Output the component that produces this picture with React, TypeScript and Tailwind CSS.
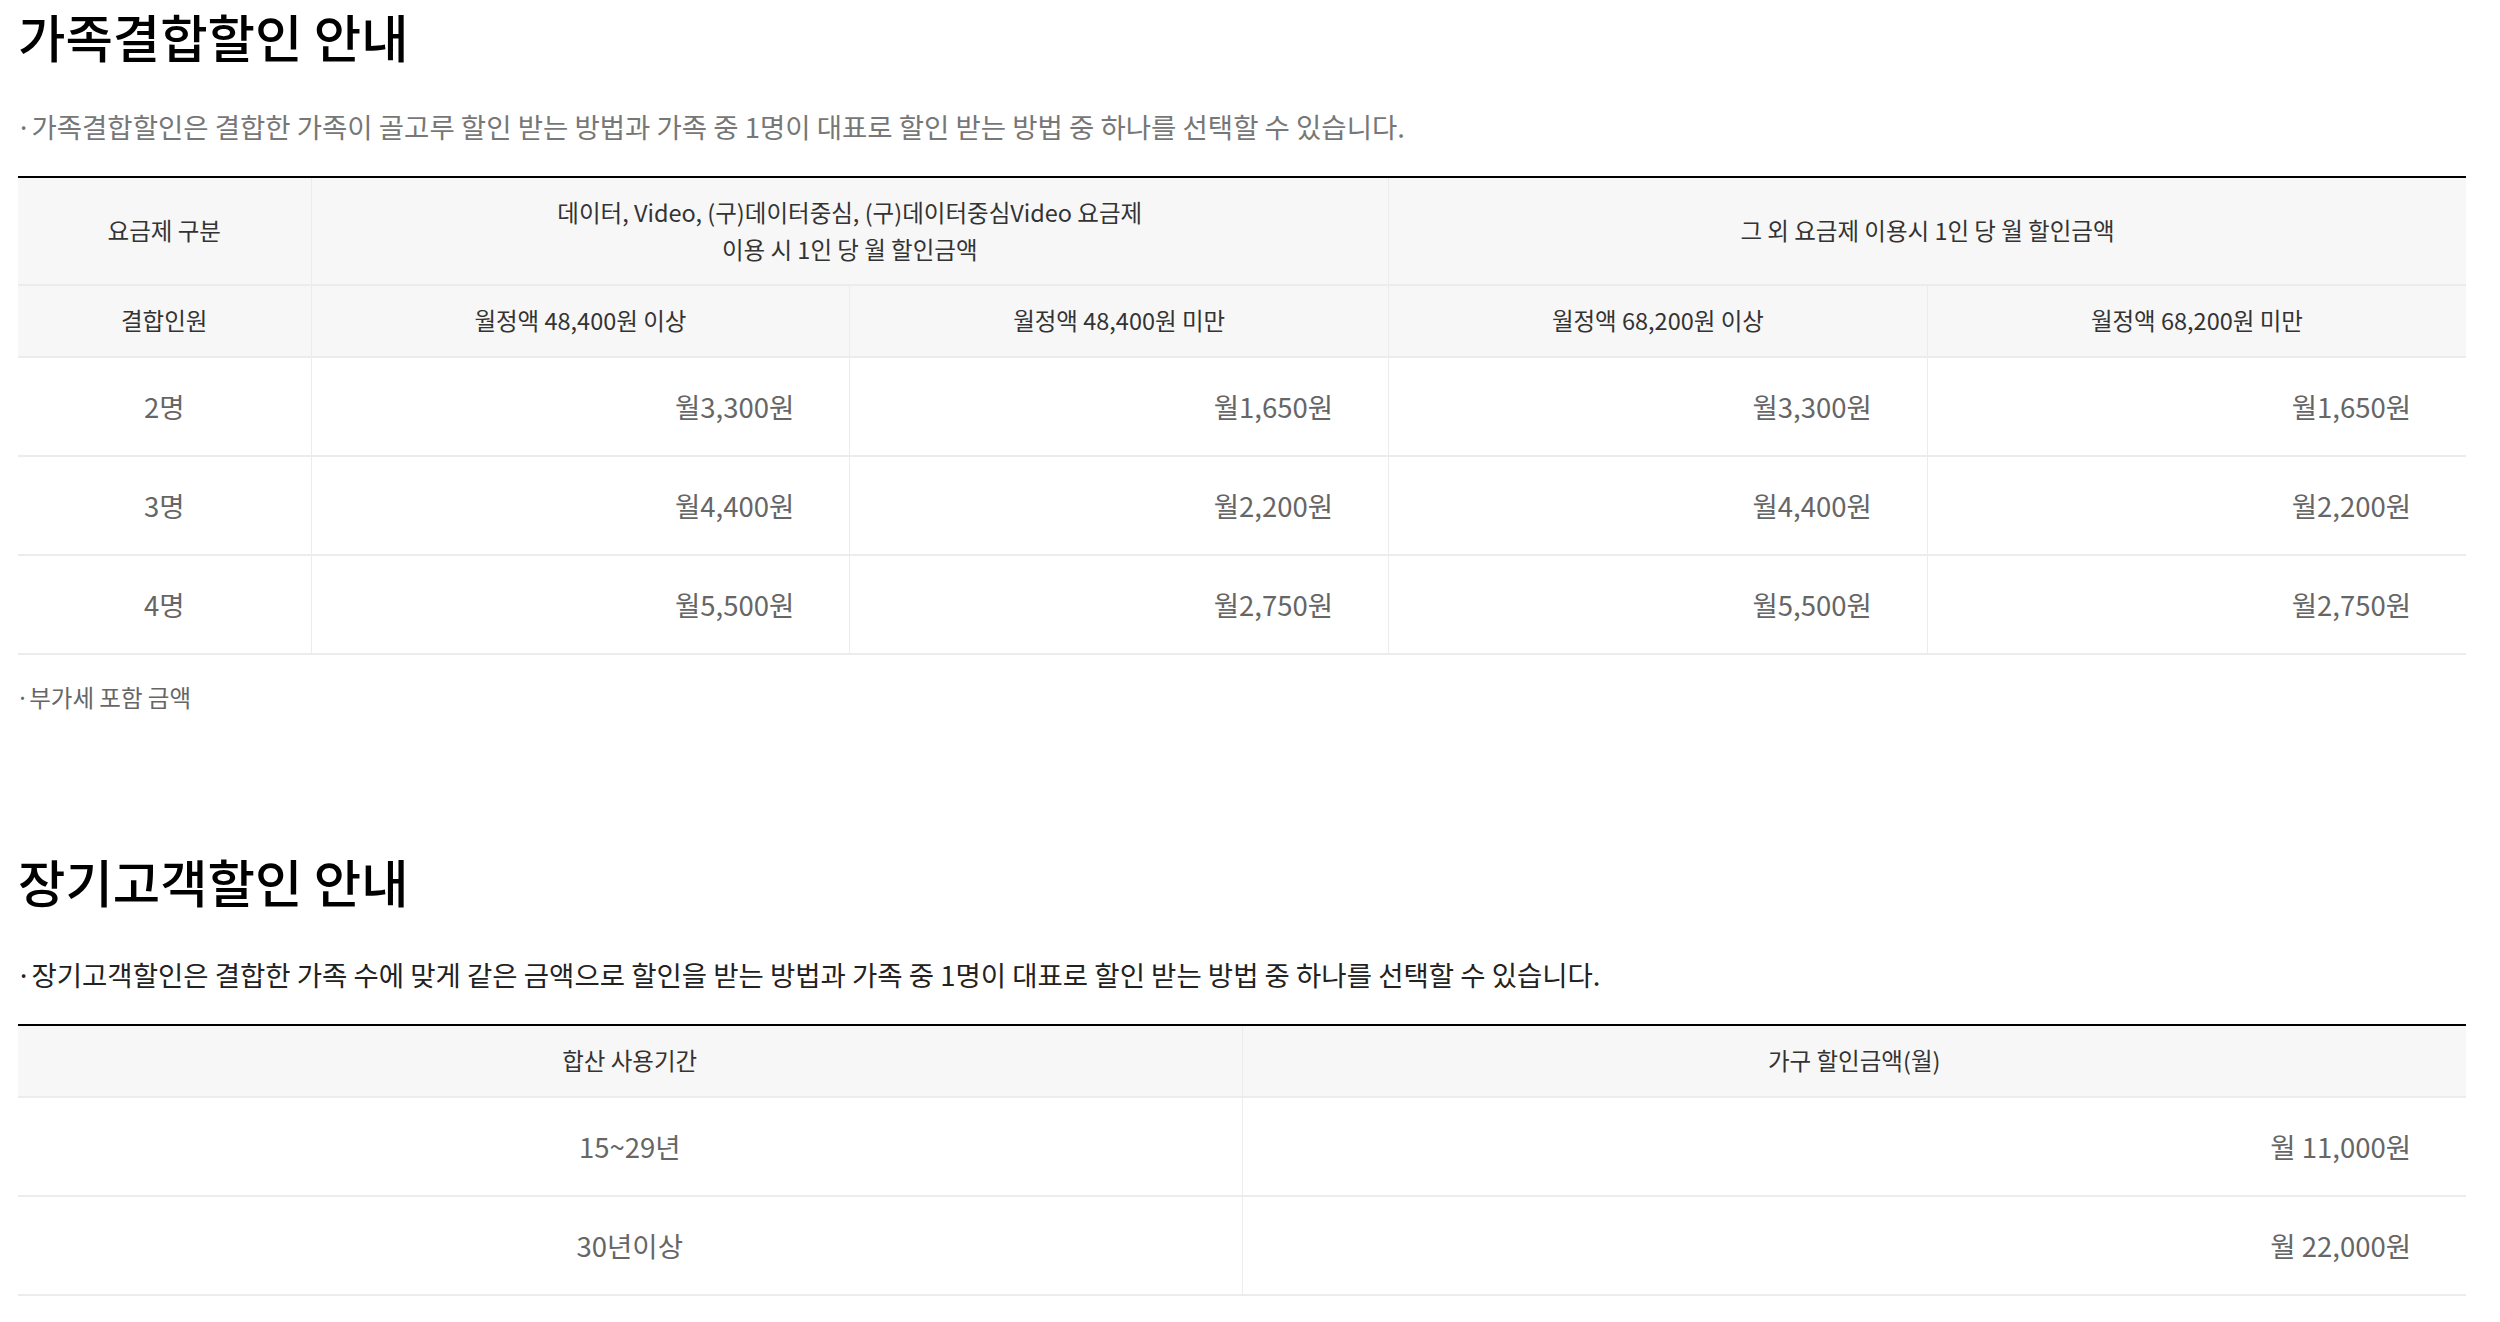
const familyRows = [
  { people: '2명', values: ['월3,300원', '월1,650원', '월3,300원', '월1,650원'] },
  { people: '3명', values: ['월4,400원', '월2,200원', '월4,400원', '월2,200원'] },
  { people: '4명', values: ['월5,500원', '월2,750원', '월5,500원', '월2,750원'] },
]

const longRows = [
  { period: '15~29년', amount: '월 11,000원' },
  { period: '30년이상', amount: '월 22,000원' },
]

export default function App() {
  return (
    <div className="w-[2500px] min-h-[1322px] bg-white px-[18px] pr-[34px] font-['Noto_Sans_CJK_KR','Noto_Sans',sans-serif]">
      {/* 가족결합할인 */}
      <section>
        <h2 className="text-[51.5px] leading-[72px] font-medium text-black">가족결합할인 안내</h2>
        <p className="mt-[36px] -ml-[2px] text-[27.5px] leading-[36px] text-[#777]">·가족결합할인은 결합한 가족이 골고루 할인 받는 방법과 가족 중 1명이 대표로 할인 받는 방법 중 하나를 선택할 수 있습니다.</p>

        <table className="mt-[32px] w-full table-fixed border-collapse border-t-2 border-black">
          <colgroup>
            <col className="w-[293px]" />
            <col />
            <col />
            <col />
            <col />
          </colgroup>
          <thead>
            <tr className="h-[108px] bg-[#f7f7f7] text-[23.5px] text-[#333]">
              <th className="font-normal border-b-2 border-[#ececec]">요금제 구분</th>
              <th colSpan={2} className="font-normal leading-[37px] border-b-2 border-l border-[#ececec]">
                데이터, Video, (구)데이터중심, (구)데이터중심Video 요금제
                <br />
                이용 시 1인 당 월 할인금액
              </th>
              <th colSpan={2} className="font-normal border-b-2 border-l border-[#ececec]">그 외 요금제 이용시 1인 당 월 할인금액</th>
            </tr>
            <tr className="h-[72px] bg-[#f7f7f7] text-[23.5px] text-[#333]">
              <th className="font-normal border-b-2 border-[#ececec]">결합인원</th>
              <th className="font-normal border-b-2 border-l border-[#ececec]">월정액 48,400원 이상</th>
              <th className="font-normal border-b-2 border-l border-[#ececec]">월정액 48,400원 미만</th>
              <th className="font-normal border-b-2 border-l border-[#ececec]">월정액 68,200원 이상</th>
              <th className="font-normal border-b-2 border-l border-[#ececec]">월정액 68,200원 미만</th>
            </tr>
          </thead>
          <tbody>
            {familyRows.map((row) => (
              <tr key={row.people} className="h-[99px] text-[27.5px] text-[#666]">
                <td className="text-center border-b-2 border-[#ececec]">{row.people}</td>
                {row.values.map((v, i) => (
                  <td key={i} className="text-right pr-[55px] border-b-2 border-l border-[#ececec]">{v}</td>
                ))}
              </tr>
            ))}
          </tbody>
        </table>

        <p className="mt-[26px] -ml-[2px] text-[23.5px] leading-[32px] text-[#666]">·부가세 포함 금액</p>
      </section>

      {/* 장기고객할인 */}
      <section className="mt-[132px]">
        <h2 className="text-[51.5px] leading-[72px] font-medium text-black">장기고객할인 안내</h2>
        <p className="mt-[39px] -ml-[2px] text-[27.5px] leading-[36px] text-[#222]">·장기고객할인은 결합한 가족 수에 맞게 같은 금액으로 할인을 받는 방법과 가족 중 1명이 대표로 할인 받는 방법 중 하나를 선택할 수 있습니다.</p>

        <table className="mt-[32px] w-full table-fixed border-collapse border-t-2 border-black">
          <thead>
            <tr className="h-[72px] bg-[#f7f7f7] text-[23.5px] text-[#333]">
              <th className="font-normal border-b-2 border-[#ececec]">합산 사용기간</th>
              <th className="font-normal border-b-2 border-l border-[#ececec]">가구 할인금액(월)</th>
            </tr>
          </thead>
          <tbody>
            {longRows.map((row) => (
              <tr key={row.period} className="h-[99px] text-[27.5px] text-[#666]">
                <td className="text-center border-b-2 border-[#ececec]">{row.period}</td>
                <td className="text-right pr-[55px] border-b-2 border-l border-[#ececec]">{row.amount}</td>
              </tr>
            ))}
          </tbody>
        </table>
      </section>
    </div>
  )
}
